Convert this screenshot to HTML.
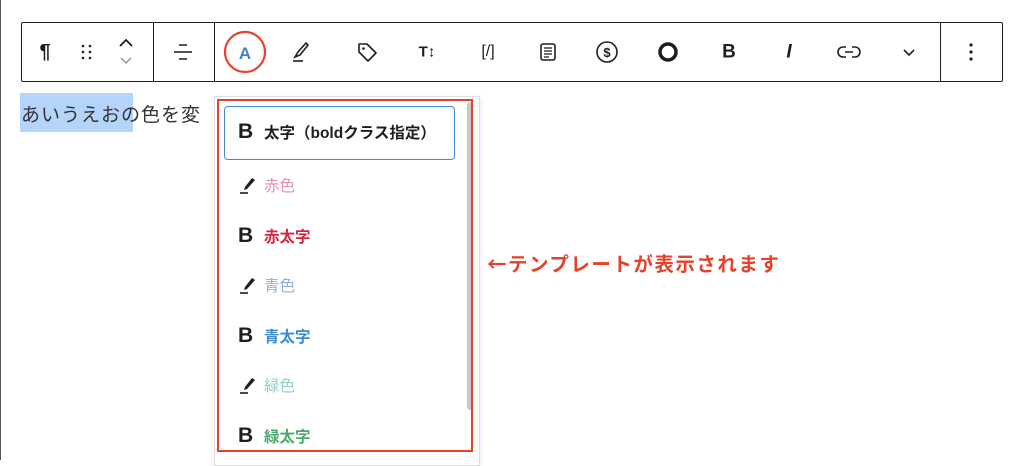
<!DOCTYPE html>
<html><head><meta charset="utf-8"><style>
*{margin:0;padding:0;box-sizing:border-box}
body{width:1024px;height:460px;background:#fff;position:relative;overflow:hidden;font-family:"Liberation Sans","Noto Sans CJK JP",sans-serif;color:#1e1e1e}
.edge{position:absolute;left:0;top:0;width:1px;height:460px;background:#555}
.tb{position:absolute;left:21px;top:22px;width:982px;height:60px;border:1px solid #1e1e1e;border-radius:2px}
.div{position:absolute;top:0;width:1px;height:58px;background:#1e1e1e}
.ic{position:absolute;top:52px;transform:translate(-50%,-50%);font-weight:bold;font-size:18px;line-height:1}
svg{display:block}
.hl{position:absolute;left:20px;top:93px;width:113px;height:39px;background:#b4d4fa}
.txt{position:absolute;left:21px;top:100px;font-size:19px;color:#333;letter-spacing:1px}
.pop{position:absolute;left:214px;top:96px;width:266px;height:370px;background:#fff;border:1px solid #ddd;box-shadow:0 2px 6px rgba(0,0,0,.1)}
.red{position:absolute;left:217px;top:99px;width:256px;height:353px;border:2.5px solid #e8402a}
.sb{position:absolute;left:467px;top:102px;width:6px;height:308px;background:#c8c8c8;border-radius:3px}
.item{position:absolute;left:238px;font-size:15.5px;display:flex;align-items:center;gap:8px}
.first{position:absolute;left:224px;top:106px;width:231px;height:54px;border:1.5px solid #3d8bd0;border-radius:4px}
.B{font-size:21px;font-weight:bold;color:#1e1e1e;width:18px}
.ann{position:absolute;left:487px;top:248px;font-size:19.5px;font-weight:bold;color:#e8402a;letter-spacing:1.5px;font-family:"Noto Sans CJK JP",sans-serif}
</style></head><body>
<div class="edge"></div>
<div class="tb">
<div class="div" style="left:131px"></div>
<div class="div" style="left:192px"></div>
<div class="div" style="left:918px"></div>
</div>
<div class="ic" style="left:45px;font-size:20px">¶</div>
<div class="ic" style="left:87px"><svg width="12" height="18"><g fill="#1e1e1e"><circle cx="2" cy="3" r="1.3"/><circle cx="9" cy="3" r="1.3"/><circle cx="2" cy="9" r="1.3"/><circle cx="9" cy="9" r="1.3"/><circle cx="2" cy="15" r="1.3"/><circle cx="9" cy="15" r="1.3"/></g></svg></div>
<div class="ic" style="left:126px"><svg width="16" height="30"><path d="M2 9l6-6 6 6" stroke="#1e1e1e" stroke-width="1.8" fill="none"/><path d="M3 21l5 5 5-5" stroke="#999" stroke-width="1.5" fill="none"/></svg></div>
<div class="ic" style="left:183px"><svg width="22" height="20"><path d="M7 3h8M2 10h18M7 17h8" stroke="#1e1e1e" stroke-width="1.6"/></svg></div>
<div class="ic" style="left:245px"><svg width="44" height="44"><circle cx="22" cy="22" r="20" stroke="#e8402a" stroke-width="2.2" fill="none"/><text x="22" y="29" text-anchor="middle" font-size="17" fill="#3d85c6" font-family="Liberation Sans">A</text></svg></div>
<div class="ic" style="left:300px"><svg width="20" height="22"><path d="M16 2L8 11l-3 5 5-2 8-10z" stroke="#1e1e1e" stroke-width="1.6" fill="none"/><path d="M3 20h10" stroke="#1e1e1e" stroke-width="1.6"/></svg></div>
<div class="ic" style="left:367px"><svg width="22" height="22"><path d="M3 3h8l9 9-8 8-9-9z" stroke="#1e1e1e" stroke-width="1.6" fill="none" stroke-linejoin="round"/><circle cx="7.5" cy="7.5" r="1.3" fill="#1e1e1e"/></svg></div>
<div class="ic" style="left:427px;font-size:15px">T↕</div>
<div class="ic" style="left:488px;font-size:16px;font-weight:normal">[/]</div>
<div class="ic" style="left:548px"><svg width="18" height="20"><rect x="2" y="2" width="14" height="16" rx="2" stroke="#1e1e1e" stroke-width="1.6" fill="none"/><path d="M5 6h8M5 9h8M5 12h8M5 15h5" stroke="#1e1e1e" stroke-width="1.3"/></svg></div>
<div class="ic" style="left:607px"><svg width="24" height="24"><circle cx="12" cy="12" r="10" stroke="#1e1e1e" stroke-width="1.6" fill="none"/><text x="12" y="17" text-anchor="middle" font-size="13" font-weight="bold" fill="#1e1e1e" font-family="Liberation Sans">$</text></svg></div>
<div class="ic" style="left:668px"><svg width="22" height="22"><circle cx="11" cy="11" r="8" stroke="#1e1e1e" stroke-width="3.5" fill="none"/></svg></div>
<div class="ic" style="left:729px;font-size:19px">B</div>
<div class="ic" style="left:789px;font-size:19px;font-style:italic">I</div>
<div class="ic" style="left:849px"><svg width="24" height="14"><path d="M9 2H6a5 5 0 000 10h3M15 2h3a5 5 0 010 10h-3M8 7h8" stroke="#1e1e1e" stroke-width="1.6" fill="none"/></svg></div>
<div class="ic" style="left:909px"><svg width="14" height="10"><path d="M2 3l5 5 5-5" stroke="#1e1e1e" stroke-width="1.6" fill="none"/></svg></div>
<div class="ic" style="left:971px"><svg width="4" height="20"><g fill="#1e1e1e"><circle cx="2" cy="3" r="1.6"/><circle cx="2" cy="10" r="1.6"/><circle cx="2" cy="17" r="1.6"/></g></svg></div>

<div class="hl"></div>
<div class="txt">あいうえおの色を変</div>
<div class="pop"></div>
<div class="sb"></div>
<div class="red"></div>
<div class="first"></div>
<div class="item" style="top:120px"><span class="B">B</span><b style="color:#1e1e1e">太字（boldクラス指定）</b></div>
<div class="item" style="top:174px"><svg width="18" height="18"><path d="M14 2l3 2-8 9-3 1 1-3z" fill="#1e1e1e"/><path d="M2 17h8" stroke="#1e1e1e" stroke-width="1.6"/></svg><span style="color:#e58fb5">赤色</span></div>
<div class="item" style="top:224px"><span class="B">B</span><b style="color:#d7263d">赤太字</b></div>
<div class="item" style="top:274px"><svg width="18" height="18"><path d="M14 2l3 2-8 9-3 1 1-3z" fill="#1e1e1e"/><path d="M2 17h8" stroke="#1e1e1e" stroke-width="1.6"/></svg><span style="color:#8fb0dc">青色</span></div>
<div class="item" style="top:324px"><span class="B">B</span><b style="color:#3d8bd0">青太字</b></div>
<div class="item" style="top:374px"><svg width="18" height="18"><path d="M14 2l3 2-8 9-3 1 1-3z" fill="#1e1e1e"/><path d="M2 17h8" stroke="#1e1e1e" stroke-width="1.6"/></svg><span style="color:#93cfc8">緑色</span></div>
<div class="item" style="top:424px"><span class="B">B</span><b style="color:#4caa6a">緑太字</b></div>
<div class="ann">←テンプレートが表示されます</div>
</body></html>
